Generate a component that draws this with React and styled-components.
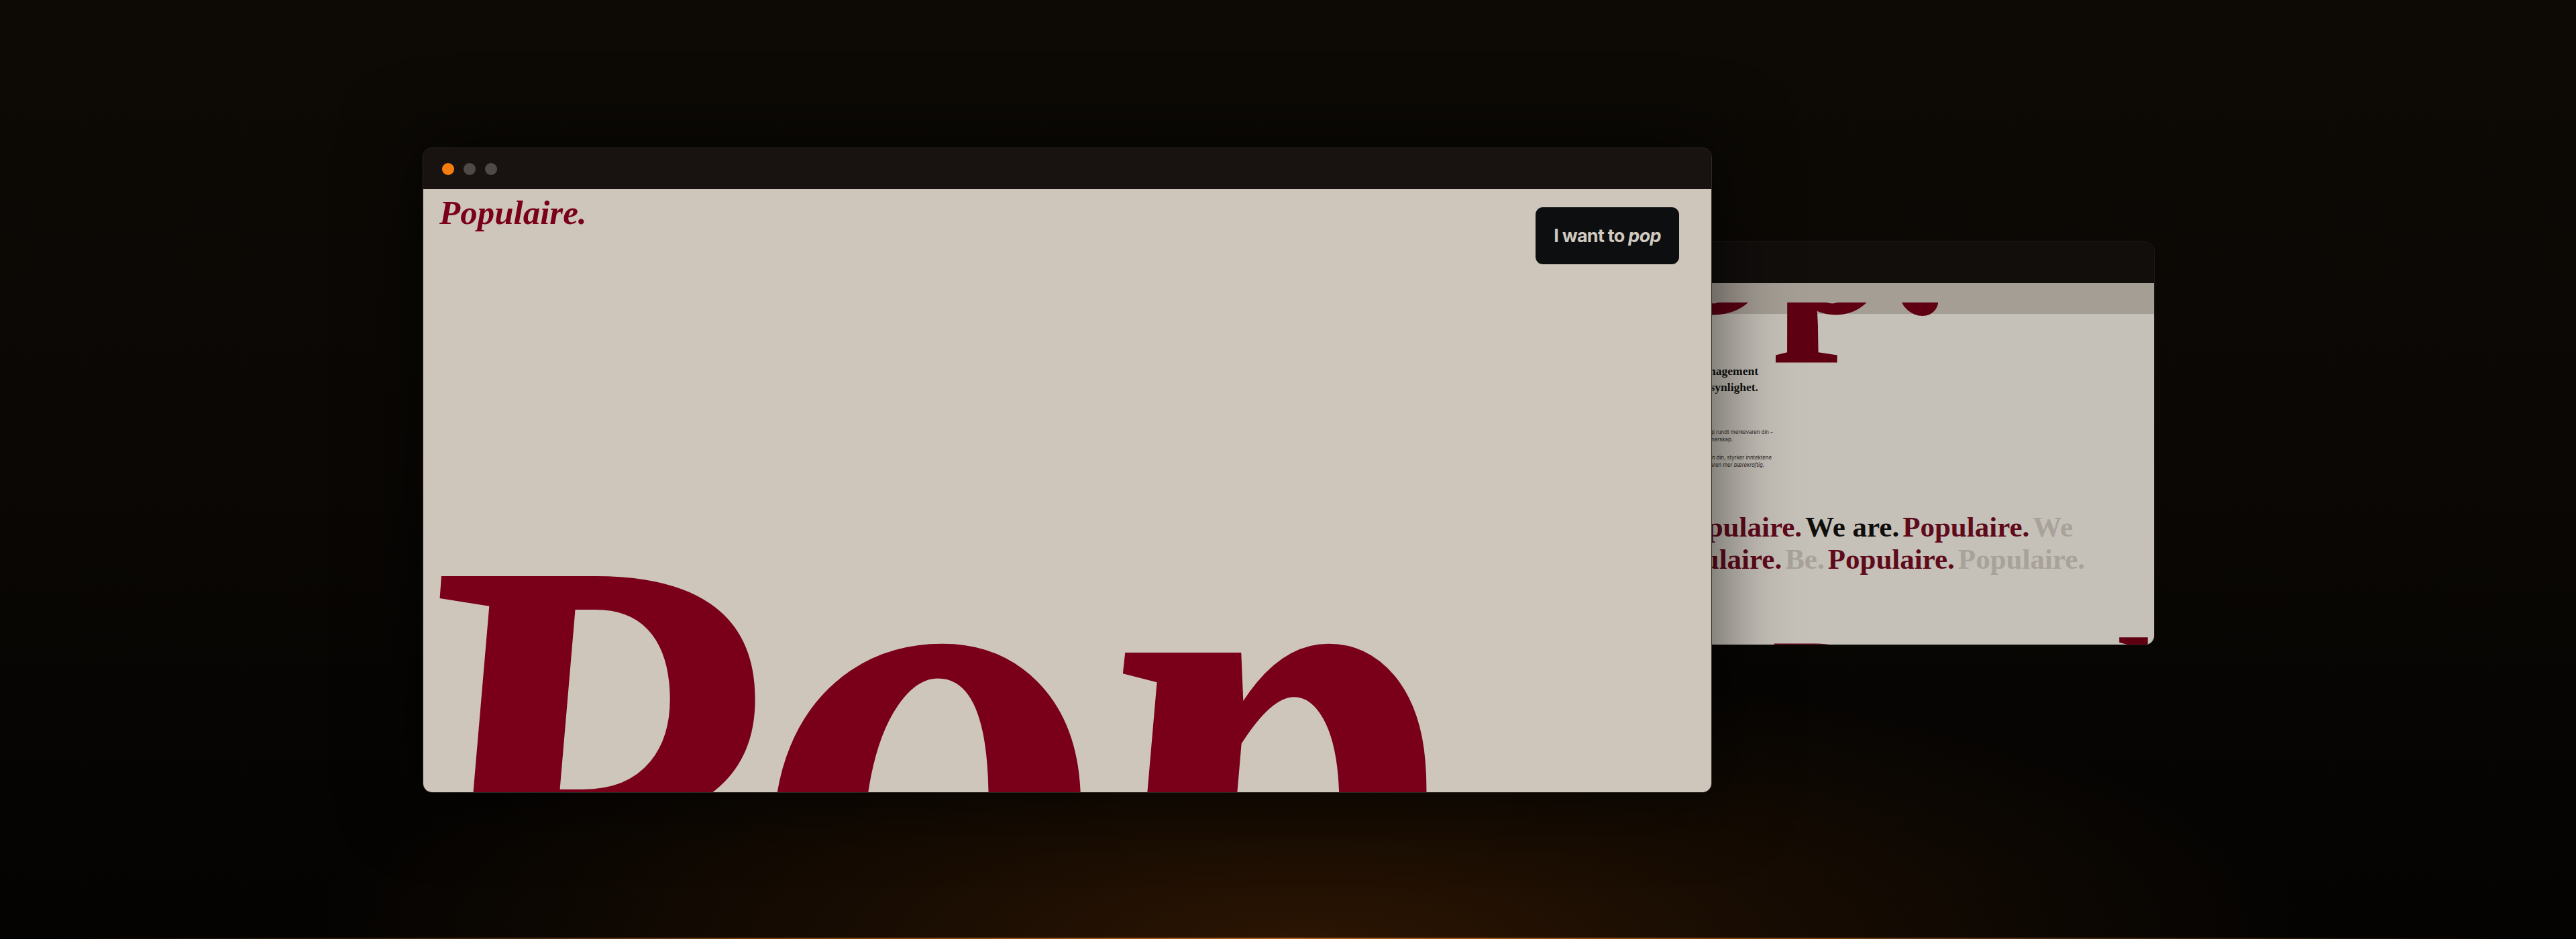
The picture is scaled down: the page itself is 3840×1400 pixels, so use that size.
import React from 'react';
import styled, {createGlobalStyle} from 'styled-components';

const GlobalStyle = createGlobalStyle`
    html, body {
        margin: 0;
        padding: 0;
        background: #080604;
    }
`;

const serif = `"Liberation Serif", "Times New Roman", serif`;

const Stage = styled.div`
    position: relative;
    width: 3840px;
    height: 1400px;
    overflow: hidden;
    background:
        radial-gradient(ellipse 1500px 420px at 1950px 1410px, #2c1503 0%, rgba(36, 18, 3, 0.62) 45%, rgba(10, 6, 3, 0) 100%),
        linear-gradient(180deg, #0d0a06 0%, #0a0704 50%, #040302 100%);
`;

const GlowLine = styled.div`
    position: absolute;
    left: 0;
    right: 0;
    bottom: 0;
    height: 2px;
    background: linear-gradient(90deg, rgba(176, 96, 30, 0) 2%, #b0601e 50%, rgba(176, 96, 30, 0) 98%);
`;

const Window = styled.div`
    position: absolute;
    left: ${p => p.$left}px;
    top: ${p => p.$top}px;
    width: ${p => p.$width}px;
    height: ${p => p.$height}px;
    z-index: ${p => p.$z};
    display: flex;
    flex-direction: column;
    border-radius: 14px;
    overflow: hidden;
    box-sizing: border-box;
    border: 1px solid ${p => p.$line};
`;

const WindowShadow = styled.div`
    position: absolute;
    left: 630px;
    top: 220px;
    width: 1922px;
    height: 962px;
    z-index: 3;
    border-radius: 14px;
    box-shadow: 0 0 110px 10px rgba(0, 0, 0, 0.55);
`;

const TitleBar = styled.div`
    height: 61px;
    flex: none;
    display: flex;
    align-items: center;
    gap: 14px;
    padding-left: 28px;
    background: ${p => p.$bg};
`;

const Dot = styled.span`
    width: 18px;
    height: 18px;
    border-radius: 50%;
    background: ${p => p.$color};
`;

const MainBody = styled.div`
    position: relative;
    flex: 1;
    overflow: hidden;
    background: #cec6bb;
    padding: 0 48px 0 24px;
`;

const TopRow = styled.div`
    display: flex;
    justify-content: space-between;
    align-items: flex-start;
`;

const Logo = styled.div`
    padding-top: 5px;
    font-family: ${serif};
    font-weight: 700;
    font-style: italic;
    font-size: 51px;
    line-height: 60px;
    color: #7a0019;
`;

const PopButton = styled.button`
    width: 214px;
    height: 85px;
    margin-top: 27px;
    padding: 0;
    border: 0;
    border-radius: 11px;
    background: #0d0e0f;
    color: #cfc9bf;
    font-family: Inter, "Liberation Sans", sans-serif;
    font-weight: 700;
    font-size: 27px;
    letter-spacing: -0.7px;

    em {
        font-style: italic;
    }
`;

const BigWord = styled.div`
    font-family: ${serif};
    font-weight: 700;
    font-style: italic;
    font-size: ${p => p.$size}px;
    line-height: 1;
    white-space: nowrap;
    color: ${p => p.$color};
    transform-origin: 0 100%;
    transform: scaleX(${p => p.$stretch}) skewX(${p => p.$skew}deg);
`;

const TallLetters = styled.span`
    font-size: ${p => p.$size}px;
`;

const MainHero = styled.div`
    margin-top: 174px;
    margin-left: -26px;
`;

const BackBody = styled.div`
    position: relative;
    flex: 1;
    overflow: hidden;
    background: #c5c0b8;
`;

const Band = styled.div`
    position: absolute;
    left: 0;
    right: 0;
    top: 0;
    height: 46px;
    background: #a59e95;
`;

const ClipRow = styled.div`
    position: relative;
    height: 95px;
    margin-top: 29px;
    overflow: hidden;
`;

const ClipWord = styled.div`
    position: absolute;
    left: -11px;
    bottom: 23px;
`;

const TextColumn = styled.div`
    width: 330px;
    margin-top: -4px;
`;

const Heading = styled.div`
    font-family: ${serif};
    font-weight: 700;
    font-size: 17.5px;
    line-height: 23.5px;
    color: #111;
    text-align: right;
`;

const SmallText = styled.div`
    width: 352px;
    margin-top: 50px;
    font-family: Inter, "Liberation Sans", sans-serif;
    font-size: 7.8px;
    line-height: 11px;
    color: #2a2725;
    text-align: right;
`;

const SmallLine = styled.div`
    padding-right: ${p => p.$trim}px;
    margin-top: ${p => p.$gap}px;
    white-space: nowrap;
`;

const Ticker = styled.div`
    margin-top: 63px;
`;

const TickerRow = styled.div`
    display: flex;
    justify-content: flex-end;
    gap: 5px;
    height: 48px;
    padding-right: ${p => p.$right}px;
    font-family: ${serif};
    font-weight: 700;
    font-size: 43px;
    line-height: 48px;
    white-space: nowrap;
`;

const Word = styled.span`
    flex: none;
    color: ${p => p.$color};
`;

const BottomWord = styled.div`
    position: absolute;
    left: 363px;
    top: 494px;
`;

const RED = '#5f0a1b';
const INK = '#0f0e0d';
const GREY = '#a8a29b';

export default function App() {
    return (
        <Stage>
            <GlobalStyle />
            <GlowLine />

            <Window $left={2290} $top={360} $width={922} $height={602} $z={1} $line="#1f1c1a">
                <TitleBar $bg="#110e0c" />
                <BackBody>
                    <Band />
                    <ClipRow>
                        <ClipWord>
                            <BigWord $size={350} $color="#5e0012" $stretch={1} $skew={10}>Pop.</BigWord>
                        </ClipWord>
                    </ClipRow>
                    <TextColumn>
                        <Heading>Talent management<br />med fokus på synlighet.</Heading>
                        <SmallText>
                            <SmallLine $trim={0} $gap={0}>Vi bygger en strategi rundt merkevaren din –</SmallLine>
                            <SmallLine $trim={60} $gap={0}>med varige partnerskap.</SmallLine>
                            <SmallLine $trim={2} $gap={16}>Vi øker synligheten din, styrker inntektene</SmallLine>
                            <SmallLine $trim={13} $gap={0}>og gjør merkevaren mer <em>bærekraftig</em>.</SmallLine>
                        </SmallText>
                    </TextColumn>
                    <Ticker>
                        <TickerRow $right={121}>
                            <Word $color={RED}>Populaire.</Word>
                            <Word $color={INK}>We are.</Word>
                            <Word $color={RED}>Populaire.</Word>
                            <Word $color={GREY}>We</Word>
                        </TickerRow>
                        <TickerRow $right={103}>
                            <Word $color={RED}>Populaire.</Word>
                            <Word $color={GREY}>Be.</Word>
                            <Word $color={RED}>Populaire.</Word>
                            <Word $color={GREY}>Populaire.</Word>
                        </TickerRow>
                    </Ticker>
                    <BottomWord>
                        <BigWord $size={239} $color="#5e0012" $stretch={1} $skew={10}>Populaire.</BigWord>
                    </BottomWord>
                </BackBody>
            </Window>

            <WindowShadow />

            <Window $left={630} $top={220} $width={1922} $height={962} $z={4} $line="#2e2a27">
                <TitleBar $bg="#181310">
                    <Dot $color="#f57c0e" />
                    <Dot $color="#4e4a47" />
                    <Dot $color="#4e4a47" />
                </TitleBar>
                <MainBody>
                    <TopRow>
                        <Logo>Populaire.</Logo>
                        <PopButton>I want to <em>pop</em></PopButton>
                    </TopRow>
                    <MainHero>
                        <BigWord $size={924} $color="#7a0019" $stretch={0.96} $skew={5}>
                            P<TallLetters $size={1070}>op</TallLetters>
                        </BigWord>
                    </MainHero>
                </MainBody>
            </Window>
        </Stage>
    );
}
